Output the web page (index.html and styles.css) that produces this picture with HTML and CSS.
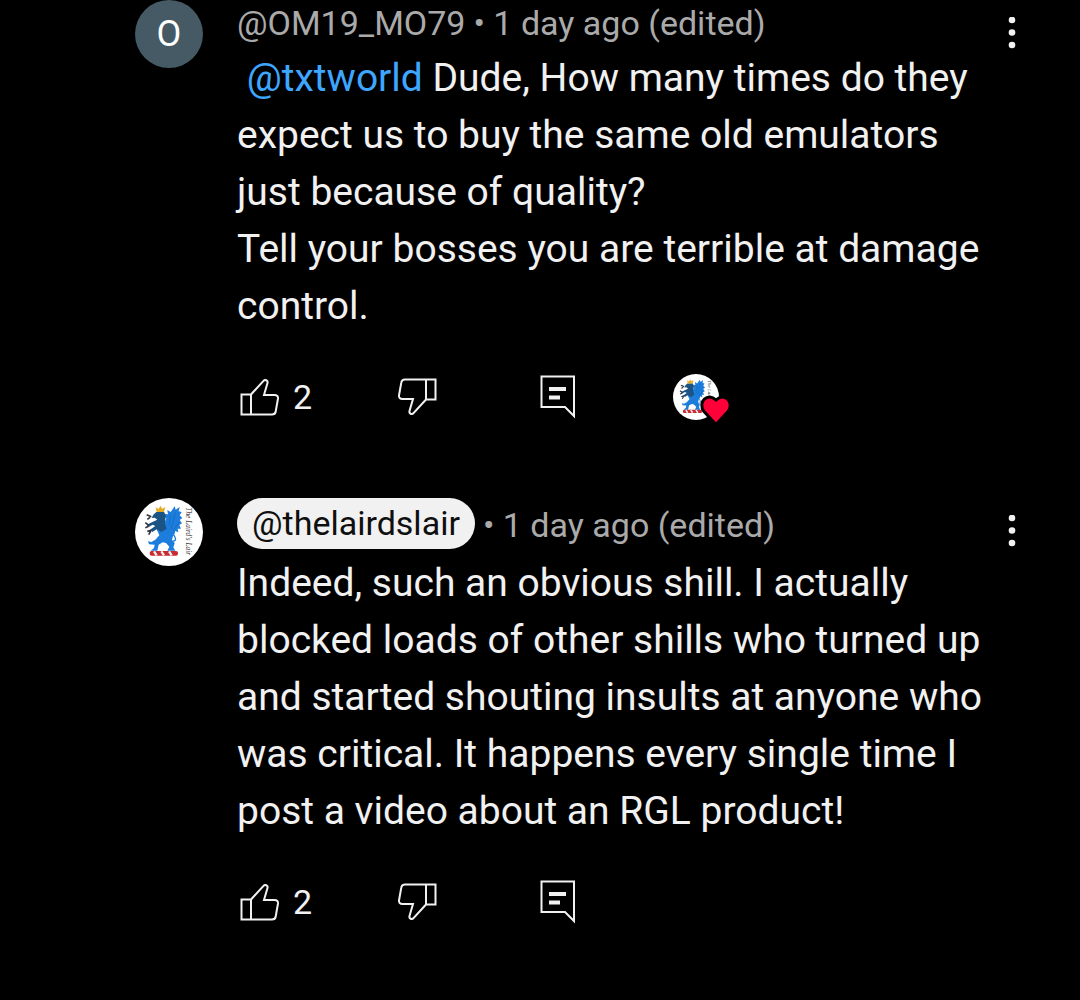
FILE: index.html
```html
<!DOCTYPE html>
<html lang="en">
<head>
    <meta charset="UTF-8">
    <meta name="viewport" content="width=device-width, initial-scale=1.0">
    <title>Comments</title>
    <link rel="stylesheet" href="styles.css">
</head>
<body>
    <svg class="sprite" aria-hidden="true">
        <symbol id="icon-like" viewBox="0 0 40 38">
            <path d="M1.5 16.5H11V36.5H1.5ZM11 16.5L23.5 2.8C25 1 28.2 2.4 27.5 5L24 17H34.5C37 17 38.3 18.5 38 20.5L35.7 33.5C35.4 35.5 34 36.5 32 36.5H11"/>
        </symbol>
        <symbol id="icon-reply" viewBox="0 0 36 44">
            <path d="M1.5 1.5H34V41L25 32H1.5Z"/>
            <path class="lines" d="M9 14H26M9 22.5H20"/>
        </symbol>
        <symbol id="icon-more" viewBox="0 0 8 32">
            <circle cx="4" cy="3" r="3.3"/>
            <circle cx="4" cy="15.5" r="3.3"/>
            <circle cx="4" cy="28" r="3.3"/>
        </symbol>
    </svg>

    <main class="comments">
        <article class="comment">
            <div class="avatar avatar-letter">O</div>
            <div class="content">
                <header class="meta">
                    <span class="author">@OM19_MO79</span>
                    <span>• 1 day ago (edited)</span>
                </header>
                <p class="text">&nbsp;<a href="#">@txtworld</a> Dude, How many times do they expect us to buy the same old emulators just because of quality?<br>Tell your bosses you are terrible at damage control.</p>
                <div class="actions">
                    <button type="button" class="action" aria-label="Like, 2 likes"><svg class="thumb"><use href="#icon-like"/></svg><span>2</span></button>
                    <button type="button" class="action" aria-label="Dislike"><svg class="thumb down"><use href="#icon-like"/></svg></button>
                    <button type="button" class="action" aria-label="Reply"><svg class="reply"><use href="#icon-reply"/></svg></button>
                    <div class="hearted">
                        <svg class="hearted-avatar" viewBox="15 18 204 204"><use href="#griffin"/></svg>
                        <svg class="heart" viewBox="0 0 32 32"><path d="M16 30.5L4 17.5C-3 8 8-2 16 6C24-2 35 8 28 17.5Z"/></svg>
                    </div>
                </div>
            </div>
            <button type="button" class="more" aria-label="More options"><svg><use href="#icon-more"/></svg></button>
        </article>

        <article class="comment">
            <svg class="avatar" viewBox="15 18 204 204">
                <g id="griffin">
                    <rect x="15" y="18" width="204" height="204" fill="#fff"/>
                    <!-- wing -->
                    <path fill="#1c7ddc" d="M100 98L109 80L104 66L114 67L112 54L122 60L134 43L137 53L149 45L146 58L155 60L149 70L157 78L149 84L156 94L148 99L153 110L143 110L145 121L135 117L133 128L116 124Z"/>
                    <path fill="none" stroke="#1266bd" stroke-width="2" d="M115 112L122 70M123 113L136 62M130 115L148 90"/>
                    <!-- body and hind legs -->
                    <path fill="#1c7ddc" d="M82 84L108 86L124 108L130 128L126 144L134 153L130 166L136 176H112L118 164L108 153L98 151L86 158L82 176H62L72 168L74 158L57 157L54 148L64 150L76 143L88 130L80 112Z"/>
                    <path fill="none" stroke="#1c7ddc" stroke-width="4" d="M128 147C144 148 134 130 127 126C120 119 136 113 132 124"/>
                    <!-- head and forelegs -->
                    <path fill="#1b5484" d="M79 60L102 59L108 73L104 92L110 110L94 120L80 112L67 120L60 113L76 102L68 98L56 105L50 98L72 88L82 83L74 77L65 78L70 68Z"/>
                    <path fill="none" stroke="#33363d" stroke-width="5" d="M64 74L50 68M60 76L52 82M56 100L46 92M56 103L46 107M64 115L52 118M62 118L56 128"/>
                    <path fill="#e4ac28" d="M80 60L77 46L86 51L91 41L97 50L106 45L102 60Z"/>
                    <!-- torse -->
                    <rect x="59" y="177" width="85" height="14" rx="6" fill="#c92b32"/>
                    <path stroke="#eee" stroke-width="7" d="M72 178L80 190M94 178L102 190M117 178L125 190"/>
                    <text class="motto" transform="translate(169 46) rotate(90)">The Laird's Lair</text>
                </g>
            </svg>
            <div class="content">
                <header class="meta">
                    <span class="author owner">@thelairdslair</span>
                    <span>• 1 day ago (edited)</span>
                </header>
                <p class="text">Indeed, such an obvious shill. I actually blocked loads of other shills who turned up and started shouting insults at anyone who was critical. It happens every single time I post a video about an RGL product!</p>
                <div class="actions">
                    <button type="button" class="action" aria-label="Like, 2 likes"><svg class="thumb"><use href="#icon-like"/></svg><span>2</span></button>
                    <button type="button" class="action" aria-label="Dislike"><svg class="thumb down"><use href="#icon-like"/></svg></button>
                    <button type="button" class="action" aria-label="Reply"><svg class="reply"><use href="#icon-reply"/></svg></button>
                </div>
            </div>
            <button type="button" class="more" aria-label="More options"><svg><use href="#icon-more"/></svg></button>
        </article>
    </main>
</body>
</html>
```
FILE: styles.css
```css
body {
    margin: 0;
    background: #000;
    color: #f1f1f1;
    font-family: Roboto, sans-serif;
}

.sprite {
    position: absolute;
    width: 0;
    height: 0;
}

.comments {
    display: flex;
    flex-direction: column;
    gap: 76px;
    padding: 0 44px 0 135px;
}

.comment {
    display: flex;
    align-items: flex-start;
}

.avatar {
    flex: none;
    width: 68px;
    height: 68px;
    margin-right: 34px;
    border-radius: 50%;
}

.avatar-letter {
    background: #455a64;
    color: #fff;
    font-size: 36px;
    line-height: 68px;
    text-align: center;
}

.motto {
    font: italic 22px "Liberation Serif", serif;
    fill: #333;
}

.content {
    flex: 1;
    min-width: 0;
}

.meta {
    display: flex;
    align-items: center;
    gap: 8px;
    margin-bottom: 4px;
    color: #aaa;
    font-size: 34px;
    line-height: 46px;
}

.owner {
    margin-bottom: 2px;
    padding: 0 15px;
    border-radius: 26px;
    background: #f1f1f1;
    color: #0f0f0f;
    line-height: 51px;
}

.text {
    margin: 0;
    font-size: 39px;
    line-height: 57px;
}

.text a {
    color: #3ea6ff;
    text-decoration: none;
}

.actions {
    display: grid;
    grid-template-columns: 157px 143px 133px auto;
    align-items: center;
    height: 50px;
    margin-top: 37px;
    padding-left: 3px;
}

.action,
.more {
    display: flex;
    align-items: center;
    padding: 0;
    border: 0;
    background: none;
    color: inherit;
    cursor: pointer;
}

.action {
    gap: 13px;
    font: 34px Roboto, sans-serif;
}

.action svg {
    fill: none;
    stroke: #f1f1f1;
    stroke-width: 2;
}

.thumb {
    width: 40px;
    height: 38px;
}

.down {
    transform: rotate(180deg);
}

.reply {
    width: 36px;
    height: 44px;
}

.lines {
    stroke-width: 4;
}

.hearted {
    position: relative;
    width: 58px;
    height: 46px;
}

.hearted-avatar {
    width: 46px;
    height: 46px;
    border-radius: 50%;
}

.heart {
    position: absolute;
    right: -1px;
    bottom: -6px;
    width: 32px;
    height: 32px;
    overflow: visible;
    fill: #ff0038;
    stroke: #000;
    stroke-width: 3;
}

.more {
    flex: none;
    justify-content: center;
    width: 48px;
    height: 66px;
}

.more svg {
    width: 8px;
    height: 32px;
    fill: #f1f1f1;
}
```
